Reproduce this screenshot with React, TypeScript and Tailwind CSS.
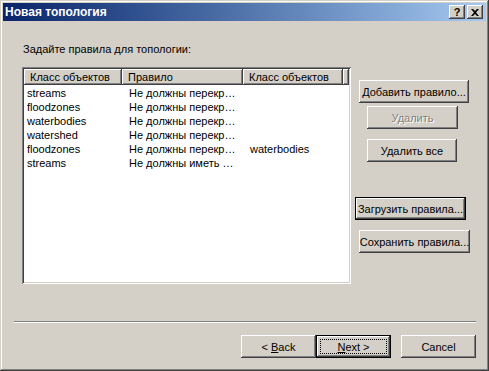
import React from "react";

const bevel =
  "bg-[#d4d0c8] shadow-[inset_-1px_-1px_#404040,inset_1px_1px_#ffffff,inset_-2px_-2px_#808080,inset_2px_2px_#d4d0c8]";

const rows = [
  ["streams", "Не должны перекр…", ""],
  ["floodzones", "Не должны перекр…", ""],
  ["waterbodies", "Не должны перекр…", ""],
  ["watershed", "Не должны перекр…", ""],
  ["floodzones", "Не должны перекр…", "waterbodies"],
  ["streams", "Не должны иметь …", ""],
];

function Btn({
  children,
  className = "",
  disabled = false,
  primary = false,
  focus = false,
}: {
  children: React.ReactNode;
  className?: string;
  disabled?: boolean;
  primary?: boolean;
  focus?: boolean;
}) {
  const text = disabled ? "text-[#808080] [text-shadow:1px_1px_0_#ffffff]" : "text-black";
  if (primary) {
    return (
      <div className={`h-[23px] border border-black ${className}`}>
        <div className={`h-full flex items-center justify-center ${bevel} ${text}`}>
          {focus ? (
            <span className="flex items-center justify-center w-[calc(100%-6px)] h-[15px] border border-dotted border-black">
              {children}
            </span>
          ) : (
            children
          )}
        </div>
      </div>
    );
  }
  return (
    <div className={`h-[23px] flex items-center justify-center ${bevel} ${text} ${className}`}>
      {children}
    </div>
  );
}

function Header({ label, w }: { label: string; w: string }) {
  return (
    <div className={`${w} h-[16px] shrink-0 flex items-center pl-[6px] ${bevel}`}>
      <span className="truncate">{label}</span>
    </div>
  );
}

export default function App() {
  return (
    <div
      className="w-[489px] h-[371px] bg-[#d4d0c8] p-[3px] flex flex-col text-[11px] leading-[14px] text-black shadow-[inset_-1px_-1px_#404040,inset_1px_1px_#d4d0c8,inset_-2px_-2px_#808080,inset_2px_2px_#ffffff]"
      style={{ fontFamily: '"Liberation Sans", Arial, sans-serif' }}
    >
      {/* title bar */}
      <div className="h-[18px] flex items-center pl-[2px] pr-[3px] bg-linear-to-r from-[#0a246a] to-[#a6caf0]">
        <span className="text-white font-bold text-[12px]">Новая топология</span>
        <div className="ml-auto flex gap-[2px]">
          <div className={`w-[16px] h-[14px] flex items-center justify-center font-bold text-[11px] leading-none ${bevel}`}>
            ?
          </div>
          <div className={`w-[16px] h-[14px] flex items-center justify-center ${bevel}`}>
            <svg width="8" height="7" viewBox="0 0 8 7">
              <path d="M0 0h2l2 2 2-2h2L5 3.5 8 7H6L4 5 2 7H0l3-3.5z" fill="#000" />
            </svg>
          </div>
        </div>
      </div>

      {/* body */}
      <div className="flex flex-col flex-1">
        <div className="mt-[21px] ml-[20px] h-[14px]">Задайте правила для топологии:</div>

        <div className="mt-[11px] flex">
          {/* list view */}
          <div className="ml-[19px] w-[329px] h-[217px] bg-white p-[2px] shadow-[inset_1px_1px_#808080,inset_-1px_-1px_#ffffff,inset_2px_2px_#404040,inset_-2px_-2px_#d4d0c8]">
            <div className="flex">
              <Header label="Класс объектов" w="w-[98px]" />
              <Header label="Правило" w="w-[121px]" />
              <Header label="Класс объектов" w="w-[100px]" />
              <div className={`flex-1 h-[16px] ${bevel}`} />
            </div>
            <div className="mt-[1px] flex flex-col">
              {rows.map((r, i) => (
                <div key={i} className="flex h-[14px] items-center">
                  <span className="w-[98px] pl-[3px] whitespace-nowrap">{r[0]}</span>
                  <span className="w-[121px] pl-[7px] whitespace-nowrap">{r[1]}</span>
                  <span className="w-[100px] pl-[7px] whitespace-nowrap">{r[2]}</span>
                </div>
              ))}
            </div>
          </div>

          {/* right buttons */}
          <div className="flex flex-col">
            <Btn className="mt-[13px] ml-[8px] w-[110px]">Добавить правило...</Btn>
            <Btn className="mt-[3px] ml-[16px] w-[91px]" disabled>
              Удалить
            </Btn>
            <Btn className="mt-[10px] ml-[16px] w-[90px]">Удалить все</Btn>
            <Btn className="mt-[35px] ml-[4px] w-[111px]" primary>
              Загрузить правила...
            </Btn>
            <Btn className="mt-[10px] ml-[8px] w-[111px]">Сохранить правила...</Btn>
          </div>
        </div>

        {/* separator */}
        <div className="mt-[37px] ml-[11px] w-[462px] h-[2px] border-t border-t-[#808080] border-b border-b-white" />

        {/* wizard buttons */}
        <div className="mt-[12px] flex justify-end pr-[10px]">
          <Btn className="w-[75px]">
            &lt;&nbsp;<span className="underline">B</span>ack
          </Btn>
          <Btn className="w-[75px]" primary focus>
            <span className="underline">N</span>ext&nbsp;&gt;
          </Btn>
          <Btn className="ml-[10px] w-[75px]">Cancel</Btn>
        </div>
      </div>
    </div>
  );
}
